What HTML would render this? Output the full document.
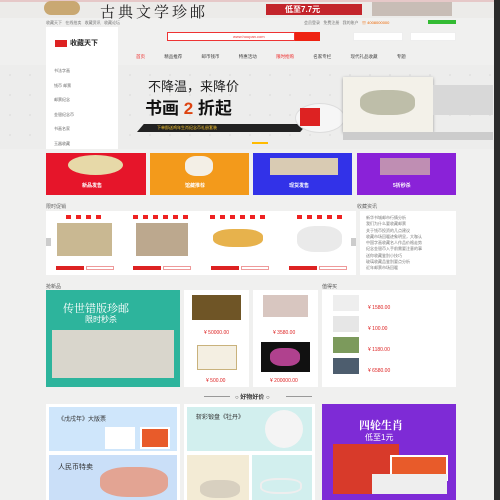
<!DOCTYPE html>
<html><head><meta charset="utf-8"><style>
*{margin:0;padding:0;box-sizing:border-box}
body{width:500px;height:500px;overflow:hidden;background:#f0f0ef;font-family:"Liberation Sans","Noto Sans CJK SC",sans-serif;position:relative;font-size:4px;color:#555}
.a{position:absolute}
.t{position:absolute;white-space:nowrap}
</style></head><body>
<div class="a" style="left:0;top:0;width:500px;height:18px;background:#ecebe9"></div>
<div class="a" style="left:0;top:0;width:500px;height:2px;background:#e6c8c8"></div>
<div class="a" style="left:44px;top:1px;width:36px;height:14px;background:#c9a872;border-radius:8px"></div>
<div class="t" style="left:100px;top:1px;font-size:15px;font-family:'Noto Serif CJK SC',serif;color:#222;letter-spacing:3px">古典文学珍邮</div>
<div class="a" style="left:266px;top:4px;width:96px;height:11px;background:#c3242b"></div>
<div class="t" style="left:285px;top:4px;font-size:8px;color:#fff;font-weight:bold">低至7.7元</div>
<div class="a" style="left:372px;top:2px;width:80px;height:14px;background:#b9a9a0;opacity:.7"></div>
<div class="a" style="left:494px;top:0;width:6px;height:500px;background:#2b2b2b"></div>
<div class="t" style="left:46px;top:20px;color:#777">收藏天下 &nbsp; 在线拍卖 &nbsp; 收藏资讯 &nbsp; 收藏论坛</div>
<div class="t" style="left:304px;top:20px;color:#777">会员登录 &nbsp; 免费注册 &nbsp; 我的账户 &nbsp; <span style="color:#e60">☏ 4008000000</span></div>
<div class="a" style="left:428px;top:20px;width:28px;height:4px;background:#3b3"></div>
<div class="a" style="left:46px;top:27px;width:72px;height:122px;background:#fff"></div>
<div class="a" style="left:55px;top:40px;width:12px;height:7px;background:#d22"></div>
<div class="t" style="left:70px;top:38px;font-size:7px;color:#222;font-weight:bold">收藏天下</div>
<div class="a" style="left:167px;top:32px;width:128px;height:9px;border:1px solid #e33;background:#fff"></div>
<div class="t" style="left:233px;top:34px;color:#e33">www.houpan.com</div>
<div class="a" style="left:295px;top:32px;width:25px;height:9px;background:#e21"></div>
<div class="a" style="left:353px;top:32px;width:50px;height:9px;background:#fff;border:1px solid #eee"></div>
<div class="a" style="left:410px;top:32px;width:46px;height:9px;background:#fff;border:1px solid #eee"></div>
<div class="t" style="left:136px;top:54px;font-size:4.5px;color:#444;word-spacing:18px"><span style="color:#e22">首页</span> 精品推荐 邮币钱币 特惠活动 <span style="color:#e22">限时抢购</span> 名家专栏 现代礼品收藏 专题</div>
<div class="a" style="left:0;top:65px;width:494px;height:84px;background:#ededec;background-image:radial-gradient(#ccc 0.7px,transparent 0.8px);background-size:20px 20px"></div>
<div class="a" style="left:46px;top:62px;width:72px;height:87px;background:#fff"></div>
<div class="t" style="left:54px;top:64px;line-height:14.5px;color:#666">书法字画<br>钱币 邮票<br>邮票纪念<br>金银纪念币<br>书画名家<br>玉器收藏</div>
<div class="t" style="left:148px;top:76px;font-size:13px;color:#222">不降温，来降价</div>
<div class="t" style="left:145px;top:94px;font-size:17px;font-weight:bold;color:#111">书画 <span style="color:#d41">2</span> 折起</div>
<div class="a" style="left:137px;top:124px;width:170px;height:8px;background:#222;clip-path:polygon(4% 0,100% 0,96% 100%,0 100%)"></div>
<div class="t" style="left:157px;top:125px;color:#fc3">下单即送鸡年生肖纪念币礼册套装</div>
<div class="a" style="left:295px;top:103px;width:50px;height:30px;border-radius:50%;background:#f6f6f6;border:1px solid #ddd"></div>
<div class="a" style="left:300px;top:108px;width:20px;height:18px;background:#d22"></div>
<div class="a" style="left:343px;top:77px;width:90px;height:55px;background:#f3f1e9;box-shadow:0 1px 3px #999"></div>
<div class="a" style="left:360px;top:90px;width:55px;height:25px;background:#8a8c6a;opacity:.5;border-radius:40%"></div>
<div class="a" style="left:433px;top:85px;width:60px;height:30px;background:#d8d8d8"></div>
<div class="a" style="left:343px;top:132px;width:150px;height:8px;background:#ccc"></div>
<div class="a" style="left:252px;top:142px;width:16px;height:2px;background:#fb0"></div>
<div class="a" style="left:46px;top:153px;width:100px;height:42px;background:#e6152a"></div>
<div class="a" style="left:150px;top:153px;width:99px;height:42px;background:#f39a1b"></div>
<div class="a" style="left:253px;top:153px;width:99px;height:42px;background:#3232e8"></div>
<div class="a" style="left:357px;top:153px;width:99px;height:42px;background:#8a22d8"></div>
<div class="a" style="left:68px;top:155px;width:55px;height:20px;border-radius:50%;background:#e7d9a8"></div>
<div class="a" style="left:185px;top:156px;width:28px;height:20px;border-radius:40%;background:#f3efe6"></div>
<div class="a" style="left:270px;top:158px;width:68px;height:17px;background:#d9cbb3"></div>
<div class="a" style="left:380px;top:158px;width:50px;height:17px;background:#caa;opacity:.8"></div>
<div class="t" style="left:82px;top:182px;font-size:5px;color:#fff;font-weight:bold">新品发售</div>
<div class="t" style="left:185px;top:182px;font-size:5px;color:#fff;font-weight:bold">馆藏推荐</div>
<div class="t" style="left:289px;top:182px;font-size:5px;color:#fff;font-weight:bold">现货发售</div>
<div class="t" style="left:393px;top:182px;font-size:5px;color:#fff;font-weight:bold">5折秒杀</div>
<div class="t" style="left:46px;top:203px;font-size:5px;color:#666">限时促销</div>
<div class="t" style="left:357px;top:203px;font-size:5px;color:#666">收藏资讯</div>
<div class="a" style="left:46px;top:211px;width:310px;height:64px;background:#fff"></div>
<div class="a" style="left:360px;top:211px;width:96px;height:64px;background:#fff"></div>
<div class="t" style="left:366px;top:215px;line-height:6.3px;color:#777">新华书城邮市行情分析<br>我们为什么要收藏邮票<br>关于钱币投资的几点建议<br>收藏市场回暖迹象明显，大咖认<br>中国字画收藏名人作品价格走势<br>纪念金银币入手前需要注意的事<br>送你收藏鉴别小技巧<br>玻璃收藏品鉴别要点分析<br>近年邮票市场回暖</div>
<div class="a" style="left:57px;top:223px;width:55px;height:33px;background:#c9b892"></div>
<div class="a" style="left:136px;top:223px;width:52px;height:33px;background:#bca88e"></div>
<div class="a" style="left:213px;top:229px;width:50px;height:18px;background:#e7b24c;border-radius:40%"></div>
<div class="a" style="left:297px;top:226px;width:45px;height:26px;background:#eaeaea;border-radius:40%"></div>
<div class="a" style="left:46px;top:238px;width:5px;height:8px;background:#ccc"></div>
<div class="a" style="left:351px;top:238px;width:5px;height:8px;background:#ccc"></div>
<div class="a" style="left:56px;top:215px;width:52px;height:4px;background:#fff"><div style="position:absolute;left:10px;width:40px;height:4px;background:repeating-linear-gradient(90deg,#e22 0 5px,#fff 5px 10px)"></div></div>
<div class="a" style="left:133px;top:215px;width:55px;height:4px;background:repeating-linear-gradient(90deg,#e22 0 5px,#fff 5px 10px)"></div>
<div class="a" style="left:210px;top:215px;width:55px;height:4px;background:repeating-linear-gradient(90deg,#e22 0 5px,#fff 5px 10px)"></div>
<div class="a" style="left:297px;top:215px;width:50px;height:4px;background:repeating-linear-gradient(90deg,#e22 0 5px,#fff 5px 10px)"></div>
<div class="a" style="left:56px;top:266px;width:28px;height:4px;background:#d22"></div><div class="a" style="left:86px;top:266px;width:28px;height:4px;border:1px solid #e99"></div>
<div class="a" style="left:133px;top:266px;width:28px;height:4px;background:#d22"></div><div class="a" style="left:163px;top:266px;width:28px;height:4px;border:1px solid #e99"></div>
<div class="a" style="left:211px;top:266px;width:28px;height:4px;background:#d22"></div><div class="a" style="left:241px;top:266px;width:28px;height:4px;border:1px solid #e99"></div>
<div class="a" style="left:289px;top:266px;width:28px;height:4px;background:#d22"></div><div class="a" style="left:319px;top:266px;width:28px;height:4px;border:1px solid #e99"></div>
<div class="t" style="left:46px;top:283px;font-size:5px;color:#555">抢新品</div>
<div class="t" style="left:322px;top:283px;font-size:5px;color:#555">值得买</div>
<div class="a" style="left:46px;top:290px;width:134px;height:97px;background:#2db49c"></div>
<div class="t" style="left:63px;top:300px;font-size:11px;color:#fff;font-family:'Noto Serif CJK SC',serif">传世错版珍邮</div>
<div class="t" style="left:85px;top:314px;font-size:8px;color:#fff">限时秒杀</div>
<div class="a" style="left:52px;top:330px;width:122px;height:48px;background:#d9d6cc"></div>
<div class="a" style="left:184px;top:290px;width:65px;height:97px;background:#fff"></div>
<div class="a" style="left:253px;top:290px;width:65px;height:97px;background:#fff"></div>
<div class="a" style="left:322px;top:290px;width:134px;height:97px;background:#fff"></div>
<div class="a" style="left:192px;top:295px;width:49px;height:25px;background:#6f5526"></div>
<div class="a" style="left:263px;top:295px;width:45px;height:22px;background:#d8c6c0"></div>
<div class="a" style="left:197px;top:345px;width:40px;height:25px;background:#f4efe2;border:1px solid #c9b27c"></div>
<div class="a" style="left:261px;top:342px;width:49px;height:30px;background:#111"></div>
<div class="a" style="left:270px;top:348px;width:30px;height:18px;background:#b0418e;border-radius:40%"></div>
<div class="t" style="left:204px;top:330px;font-size:5px;color:#d22">¥ 50000.00</div>
<div class="t" style="left:273px;top:330px;font-size:5px;color:#d22">¥ 3580.00</div>
<div class="t" style="left:206px;top:378px;font-size:5px;color:#d22">¥ 500.00</div>
<div class="t" style="left:270px;top:378px;font-size:5px;color:#d22">¥ 200000.00</div>
<div class="a" style="left:333px;top:295px;width:26px;height:16px;background:#eee"></div>
<div class="a" style="left:333px;top:316px;width:26px;height:16px;background:#e6e6e6"></div>
<div class="a" style="left:333px;top:337px;width:26px;height:16px;background:#7c9a5c"></div>
<div class="a" style="left:333px;top:358px;width:26px;height:16px;background:#4d5d6e"></div>
<div class="t" style="left:368px;top:305px;font-size:5px;color:#d22">¥ 1580.00</div>
<div class="t" style="left:368px;top:326px;font-size:5px;color:#d22">¥ 100.00</div>
<div class="t" style="left:368px;top:347px;font-size:5px;color:#d22">¥ 1180.00</div>
<div class="t" style="left:368px;top:368px;font-size:5px;color:#d22">¥ 6580.00</div>
<div class="a" style="left:204px;top:396px;width:26px;height:1px;background:#999"></div>
<div class="a" style="left:286px;top:396px;width:26px;height:1px;background:#999"></div>
<div class="t" style="left:235px;top:392px;font-size:6px;color:#333;font-weight:bold">○ 好物好价 ○</div>
<div class="a" style="left:46px;top:404px;width:134px;height:96px;background:#fff"></div>
<div class="a" style="left:49px;top:407px;width:128px;height:44px;background:#cfe6fb"></div>
<div class="a" style="left:49px;top:455px;width:128px;height:45px;background:#cadff8"></div>
<div class="t" style="left:58px;top:414px;font-size:6px;color:#333">《戊戌年》大版票</div>
<div class="a" style="left:105px;top:427px;width:30px;height:22px;background:#fff"></div>
<div class="a" style="left:140px;top:427px;width:30px;height:22px;background:#e85b2a;border:2px solid #fff"></div>
<div class="t" style="left:58px;top:462px;font-size:7px;color:#333">人民币特卖</div>
<div class="a" style="left:100px;top:467px;width:68px;height:30px;background:#e3a493;border-radius:40%"></div>
<div class="a" style="left:184px;top:404px;width:131px;height:96px;background:#fff"></div>
<div class="a" style="left:187px;top:407px;width:125px;height:44px;background:#d2efee"></div>
<div class="t" style="left:196px;top:412px;font-size:6px;color:#333">斩彩锻盘《牡丹》</div>
<div class="a" style="left:265px;top:410px;width:38px;height:38px;border-radius:50%;background:#f4f4f4"></div>
<div class="a" style="left:187px;top:455px;width:62px;height:45px;background:#f3ebd5"></div>
<div class="a" style="left:252px;top:455px;width:60px;height:45px;background:#d2efee"></div>
<div class="a" style="left:200px;top:480px;width:40px;height:18px;background:#d8d0c0;border-radius:40%"></div>
<div class="a" style="left:260px;top:478px;width:42px;height:16px;border:2px solid #eee;border-radius:40%"></div>
<div class="a" style="left:322px;top:404px;width:134px;height:96px;background:#7e2bd6"></div>
<div class="t" style="left:359px;top:417px;font-size:11px;color:#fff;font-family:'Noto Serif CJK SC',serif;font-weight:bold">四轮生肖</div>
<div class="t" style="left:365px;top:432px;font-size:8px;color:#fff">低至1元</div>
<div class="a" style="left:333px;top:444px;width:66px;height:50px;background:#d83a2a"></div>
<div class="a" style="left:390px;top:455px;width:58px;height:26px;background:#e85b2a;border:2px solid #fff"></div>
<div class="a" style="left:372px;top:474px;width:75px;height:20px;background:#eee"></div>
</body></html>
